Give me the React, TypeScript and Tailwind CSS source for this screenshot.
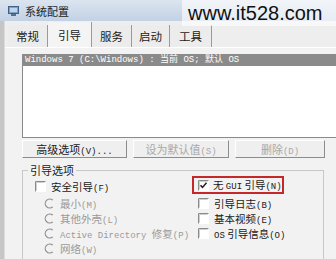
import React from 'react';

const cjk = '"Noto Sans CJK SC", "Liberation Sans", sans-serif';
const mono = '"Liberation Mono", "Noto Sans CJK SC", monospace';

const Latin: React.FC<{ children: React.ReactNode }> = ({ children }) => (
  <span className="text-[9px] leading-none" style={{ fontFamily: mono }}>
    {children}
  </span>
);

const CheckBox: React.FC<{ checked?: boolean }> = ({ checked }) => (
  <svg width="11" height="11" viewBox="0 0 11 11" className="shrink-0">
    <rect x="0" y="0" width="11" height="11" fill="#ffffff" />
    <path d="M0.5 10.5V0.5H10.5" stroke="#8a8a8a" fill="none" />
    <path d="M1.5 9.5V1.5H9.5" stroke="#cfcfcf" fill="none" />
    {checked && <path d="M2.5 5.2l2 2.2 4-4.6" stroke="#222" strokeWidth="1.6" fill="none" />}
  </svg>
);

const Radio: React.FC = () => (
  <svg width="11" height="11" viewBox="0 0 11 11" className="shrink-0">
    <path d="M8.8 2.2A4.5 4.5 0 1 0 8.8 8.8" stroke="#8f8f8f" strokeWidth="1.2" fill="none" />
    <path d="M8.8 8.8A4.5 4.5 0 0 0 8.8 2.2" stroke="#f4f4f4" strokeWidth="1.2" fill="none" />
  </svg>
);

const Tab: React.FC<{ label: string; active?: boolean; w: string }> = ({ label, active, w }) => (
  <div
    className={`${w} flex items-center justify-center border-r border-[#9a9a9a] ${
      active ? 'h-[25px] bg-[#f4f4f4]' : 'h-[22px] bg-[#ececec]'
    }`}
  >
    <span className="text-[11.5px] leading-[16px] text-[#1a1a1a]">{label}</span>
  </div>
);

const Button: React.FC<{ w: string; disabled?: boolean; children: React.ReactNode }> = ({ w, disabled, children }) => (
  <div
    className={`${w} h-[18px] flex items-center justify-center bg-[#efefef] border border-t-white border-l-white border-r-[#8c8c8c] border-b-[#8c8c8c] text-[11px] ${
      disabled ? 'text-[#a8a8a8]' : 'text-[#1a1a1a]'
    }`}
  >
    <span className="leading-[14px]">{children}</span>
  </div>
);

const Row: React.FC<{ className?: string; children: React.ReactNode }> = ({ className = '', children }) => (
  <div className={`h-[15px] flex items-center gap-[5px] whitespace-nowrap leading-[14px] ${className}`}>{children}</div>
);

export default function App() {
  return (
    <div
      className="relative w-[336px] h-[259px] overflow-hidden bg-[#eeeeee] flex flex-col"
      style={{ fontFamily: cjk }}
    >
      {/* title bar */}
      <div className="h-[21px] shrink-0 flex items-center gap-[6px] pl-[8px] bg-gradient-to-b from-[#dbe5f0] to-[#c2d1e4]">
        <svg width="11" height="10" viewBox="0 0 11 10">
          <rect x="0.5" y="0.5" width="10" height="7" fill="#7aa2cf" stroke="#44607e" />
          <rect x="2" y="2" width="7" height="4" fill="#bcd6f2" />
          <rect x="3" y="8" width="5" height="2" fill="#5a6e84" />
        </svg>
        <span className="text-[11px] leading-[14px] text-[#222]">系统配置</span>
      </div>

      <div className="flex flex-1">
        {/* left window frame */}
        <div className="w-[5px] shrink-0 bg-[#c6c6c6] border-r border-[#dcdcdc]" />

        <div className="flex-1 flex flex-col">
          {/* tabs */}
          <div className="h-[26px] flex items-end pl-[3px]">
            <Tab label="常规" w="w-[40px]" />
            <Tab label="引导" w="w-[44px]" active />
            <Tab label="服务" w="w-[40px]" />
            <Tab label="启动" w="w-[38px]" />
            <Tab label="工具" w="w-[42px]" />
          </div>

          {/* tab panel */}
          <div className="flex-1 border-t border-white bg-[#f2f2f2] pl-[17px] pt-[6px] flex flex-col">
            <div className="h-[84px] w-[330px] bg-white border border-[#8a8a8a] border-r-0">
              <div
                className="h-[11px] bg-[#8a8a8a] text-white text-[9px] leading-[11px] pl-[2px] whitespace-nowrap"
                style={{ fontFamily: mono }}
              >
                Windows 7 (C:\Windows) : 当前 OS; 默认 OS
              </div>
            </div>

            <div className="flex gap-[6px] mt-[2px]">
              <Button w="w-[105px]">
                高级选项<Latin>(V)...</Latin>
              </Button>
              <Button w="w-[96px]" disabled>
                设为默认值<Latin>(S)</Latin>
              </Button>
              <Button w="w-[90px]" disabled>
                删除<Latin>(D)</Latin>
              </Button>
            </div>

            {/* group box */}
            <div className="relative mt-[12px] w-[302px] flex-1 border border-[#c8c8c8] border-b-0 pt-[8px] pl-[12px] flex text-[10.5px]">
              <span className="absolute -top-[9px] left-[5px] px-[2px] bg-[#f2f2f2] text-[11px] leading-[16px] text-[#1a1a1a]">
                引导选项
              </span>

              <div className="w-[150px] flex flex-col">
                <Row className="text-[#1a1a1a]">
                  <CheckBox />
                  <span>
                    安全引导<Latin>(F)</Latin>
                  </span>
                </Row>
                <div className="pl-[9px] mt-[2px] flex flex-col text-[#9a9a9a]">
                  <Row>
                    <Radio />
                    <span>
                      最小<Latin>(M)</Latin>
                    </span>
                  </Row>
                  <Row>
                    <Radio />
                    <span>
                      其他外壳<Latin>(L)</Latin>
                    </span>
                  </Row>
                  <Row>
                    <Radio />
                    <span>
                      <Latin>Active Directory </Latin>修复<Latin>(P)</Latin>
                    </span>
                  </Row>
                  <Row>
                    <Radio />
                    <span>
                      网络<Latin>(W)</Latin>
                    </span>
                  </Row>
                </div>
              </div>

              <div className="ml-[13px] -mt-[3px] flex flex-col text-[#1a1a1a]">
                <div className="w-[92px] h-[18px] -ml-[6px] pl-[4px] border-2 border-[#c42828] flex items-center gap-[4px] whitespace-nowrap leading-[14px]">
                  <CheckBox checked />
                  <span>
                    无 <Latin>GUI</Latin> 引导<Latin>(N)</Latin>
                  </span>
                </div>
                <div className="mt-[2px] flex flex-col">
                  <Row>
                    <CheckBox />
                    <span>
                      引导日志<Latin>(B)</Latin>
                    </span>
                  </Row>
                  <Row>
                    <CheckBox />
                    <span>
                      基本视频<Latin>(E)</Latin>
                    </span>
                  </Row>
                  <Row>
                    <CheckBox />
                    <span>
                      <Latin>OS</Latin> 引导信息<Latin>(O)</Latin>
                    </span>
                  </Row>
                </div>
              </div>
            </div>
          </div>
        </div>
      </div>

      {/* watermark overlay */}
      <div className="absolute top-0 left-[182px] w-[154px] h-[26px] bg-white/60 flex items-center pl-[6px]">
        <span className="text-[20px] leading-none text-[#111]" style={{ fontFamily: '"Liberation Sans", Arial, sans-serif' }}>
          www.it528.com
        </span>
      </div>
    </div>
  );
}
